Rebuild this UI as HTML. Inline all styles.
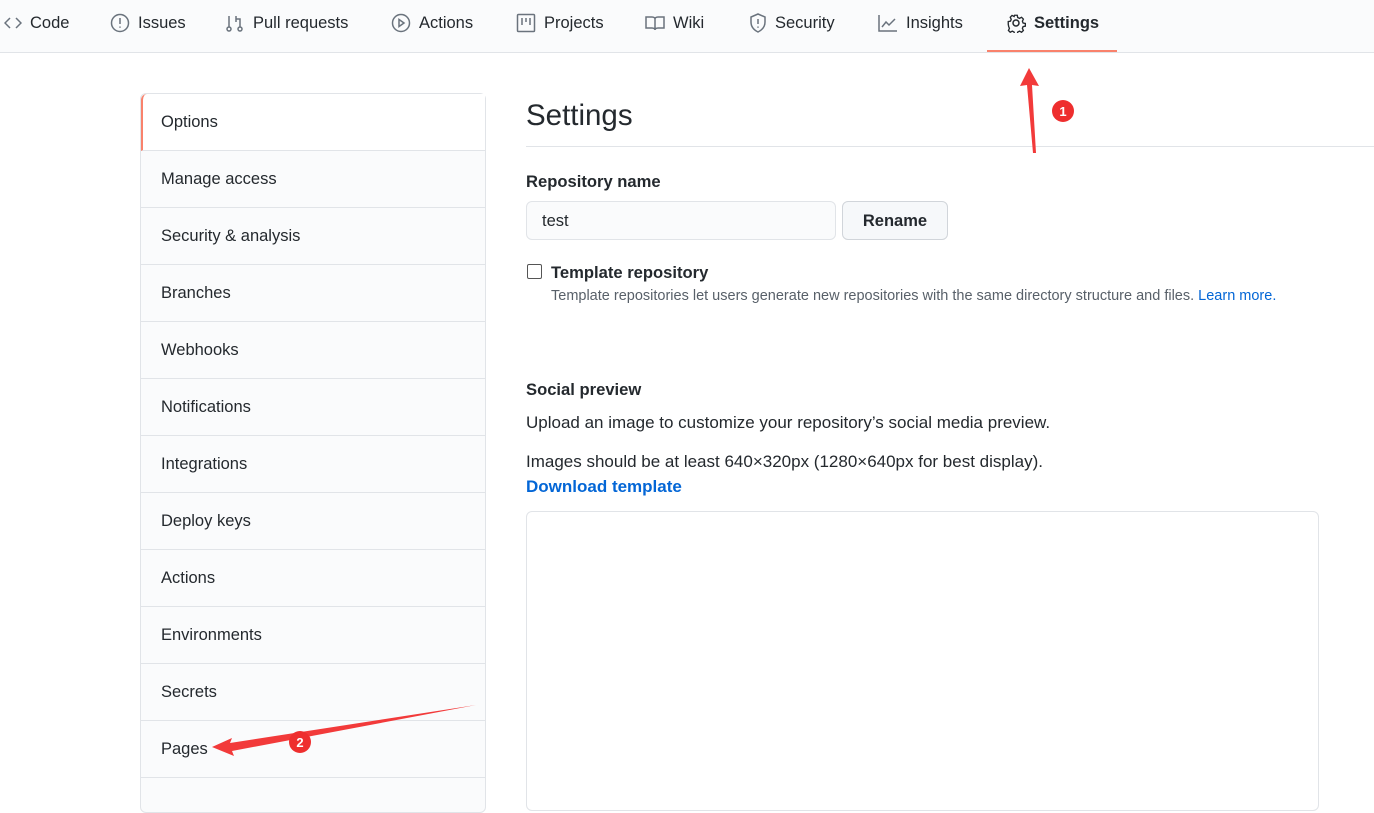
<!DOCTYPE html>
<html><head><meta charset="utf-8"><style>
*{box-sizing:border-box;margin:0;padding:0}
body{width:1374px;height:785px;overflow:hidden;background:#fff;font-family:"Liberation Sans",sans-serif;color:#24292e;position:relative}
.nav{position:absolute;left:0;top:0;width:1374px;height:53px;background:#fafbfc;border-bottom:1px solid #e1e4e8}
.tab{position:absolute;top:0;height:46px;font-size:16.5px;color:#24292e;display:flex;align-items:center;gap:8px}
.tab svg{fill:none;stroke:#6a737d;stroke-width:1.5}
.sel{position:absolute;left:987px;top:50px;width:130px;height:2px;background:#f9826c}
.side{position:absolute;left:140px;top:93px;width:346px;border:1px solid #e1e4e8;border-radius:6px;background:#fafbfc;height:720px}
.it{height:57px;border-bottom:1px solid #e1e4e8;padding-left:20px;line-height:57px;font-size:16.5px}
.it.first{border-left:2px solid #f9826c;padding-left:18px;background:#fff;border-top-left-radius:6px}
.a{position:absolute;font-size:17px}
</style></head><body>
<div class="nav">
<div class="tab" style="left:4px"><svg width="18" height="16"><path d="M6 3 1 8l5 5M12 3l5 5-5 5"/></svg>Code</div>
<div class="tab" style="left:110px"><svg width="20" height="20"><circle cx="10" cy="10" r="8.5"/><path d="M10 5v6M10 13.5v1.2"/></svg>Issues</div>
<div class="tab" style="left:225px"><svg width="20" height="20"><circle cx="4" cy="16" r="2"/><circle cx="15" cy="16" r="2"/><path d="M4 3v11M15 14V6h-4M11 3v6"/></svg>Pull requests</div>
<div class="tab" style="left:391px"><svg width="20" height="20"><circle cx="10" cy="10" r="8.5"/><path d="M8 6.5v7l5-3.5z"/></svg>Actions</div>
<div class="tab" style="left:516px"><svg width="20" height="20"><rect x="1.5" y="1.5" width="17" height="17" rx="1"/><path d="M6 5v7M10 5v4M14 5v7"/></svg>Projects</div>
<div class="tab" style="left:645px"><svg width="20" height="18"><path d="M1 3h6c2 0 3 1 3 2v11c0-1-1-2-3-2H1zM19 3h-6c-2 0-3 1-3 2v11c0-1 1-2 3-2h6z"/></svg>Wiki</div>
<div class="tab" style="left:749px"><svg width="18" height="20"><path d="M9 1 2 4v5c0 5 3 8 7 10 4-2 7-5 7-10V4z"/><path d="M9 6v5M9 13.5v1.2"/></svg>Security</div>
<div class="tab" style="left:878px"><svg width="20" height="18"><path d="M1 1v16h18M4 13l4-5 3 3 6-6"/></svg>Insights</div>
<div class="tab" style="left:1006px;font-weight:bold"><svg width="20" height="20" style="stroke:#24292e"><circle cx="10" cy="10" r="3"/><path d="M8.5 1.5h3l.5 2.5 2 1 2.3-1.2 2 2-1.1 2.3.8 2 2.5.5v3l-2.5.5-.8 2 1.1 2.3-2 2-2.3-1.2-2 1-.5 2.5h-3l-.5-2.5-2-1-2.3 1.2-2-2 1.1-2.3-.8-2L1.5 11.5v-3L4 8l.8-2-1.1-2.3 2-2L8 2.9z" transform="scale(.9) translate(1,1)"/></svg>Settings</div>
<div class="sel"></div>
</div>
<div class="side">
<div class="it first">Options</div><div class="it">Manage access</div><div class="it">Security &amp; analysis</div><div class="it">Branches</div><div class="it">Webhooks</div><div class="it">Notifications</div><div class="it">Integrations</div><div class="it">Deploy keys</div><div class="it">Actions</div><div class="it">Environments</div><div class="it">Secrets</div><div class="it">Pages</div>
</div>
<div class="a" style="left:526px;top:99px;font-size:29.5px">Settings</div>
<div style="position:absolute;left:526px;top:146px;width:848px;height:1px;background:#e1e4e8"></div>
<div class="a" style="left:526px;top:172px;font-weight:bold;font-size:16.6px">Repository name</div>
<div style="position:absolute;left:526px;top:201px;width:310px;height:39px;border:1px solid #e1e4e8;border-radius:6px;background:#fafbfc;padding:10px 15px;font-size:16.5px">test</div>
<div style="position:absolute;left:842px;top:201px;width:106px;height:39px;border:1px solid #d1d5da;border-radius:6px;background:#f6f8fa;text-align:center;line-height:39px;font-weight:bold;font-size:16.5px">Rename</div>
<div style="position:absolute;left:527px;top:264px;width:15px;height:15px;border:1px solid #555;border-radius:2px"></div>
<div class="a" style="left:551px;top:263px;font-weight:bold;font-size:16.6px">Template repository</div>
<div class="a" style="left:551px;top:288px;font-size:14.5px;color:#586069">Template repositories let users generate new repositories with the same directory structure and files. <span style="color:#0366d6">Learn more.</span></div>
<div class="a" style="left:526px;top:380px;font-weight:bold;font-size:16.6px">Social preview</div>
<div class="a" style="left:526px;top:413px">Upload an image to customize your repository’s social media preview.</div>
<div class="a" style="left:526px;top:452px">Images should be at least 640×320px (1280×640px for best display).</div>
<div class="a" style="left:526px;top:477px;font-weight:bold;color:#0366d6">Download template</div>
<div style="position:absolute;left:526px;top:511px;width:793px;height:300px;border:1px solid #e1e4e8;border-radius:6px"></div>
<svg style="position:absolute;left:0;top:0" width="1374" height="785">
<polygon points="1029,68 1020,86 1027,85 1033,153 1036,153 1032,85 1039,86" fill="#f23a3a"/>
<circle cx="1063" cy="111" r="11" fill="#ee2e2e"/><text x="1063" y="116" font-size="13" fill="#fff" text-anchor="middle" font-family="Liberation Sans" font-weight="bold">1</text>
<polygon points="212,747 232,738 230,743 476,705 232,751 234,756" fill="#f23a3a"/>
<circle cx="300" cy="742" r="11" fill="#ee2e2e"/><text x="300" y="747" font-size="13" fill="#fff" text-anchor="middle" font-family="Liberation Sans" font-weight="bold">2</text>
</svg>
</body></html>
